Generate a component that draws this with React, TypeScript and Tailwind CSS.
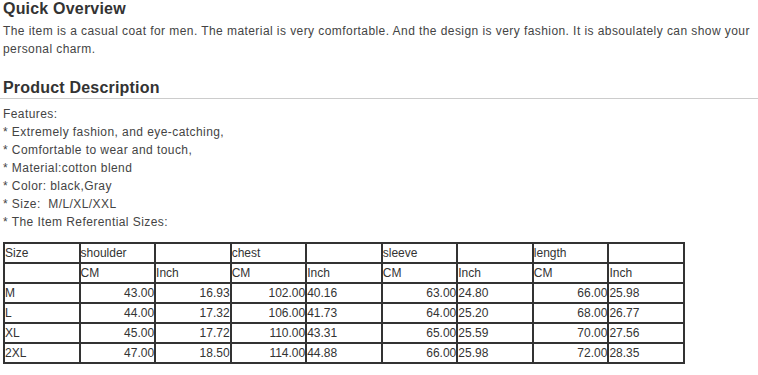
import React from "react";

const rows: string[][] = [
  ["M", "43.00", "16.93", "102.00", "40.16", "63.00", "24.80", "66.00", "25.98"],
  ["L", "44.00", "17.32", "106.00", "41.73", "64.00", "25.20", "68.00", "26.77"],
  ["XL", "45.00", "17.72", "110.00", "43.31", "65.00", "25.59", "70.00", "27.56"],
  ["2XL", "47.00", "18.50", "114.00", "44.88", "66.00", "25.98", "72.00", "28.35"],
];

const align = ["text-left", "text-right", "text-right", "text-right", "text-left", "text-right", "text-left", "text-right", "text-left"];

const cell = "border border-[#333] p-0 whitespace-nowrap overflow-hidden";

export default function App() {
  return (
    <div className="w-[758px] h-[375px] bg-white pl-[3px] font-['Liberation_Sans',Arial,sans-serif] text-[12px] leading-[18px] text-[#444] overflow-hidden">
      <h2 className="text-[16px] font-bold leading-[18.4px] tracking-[0.2px] text-[#333]">Quick Overview</h2>
      <p className="mt-[4px] tracking-[0.43px]">
        The item is a casual coat for men. The material is very comfortable. And the design is very fashion. It is absoulately can show your personal charm.
      </p>
      <h2 className="mt-[21px] -ml-[3px] pl-[3px] text-[16px] font-bold leading-[18.4px] tracking-[0.2px] text-[#333] border-b border-[#ccc]">
        Product Description
      </h2>
      <div className="mt-[6px] tracking-[0.43px]">
        <div>Features:</div>
        <div>* Extremely fashion, and eye-catching,</div>
        <div>* Comfortable to wear and touch,</div>
        <div>* Material:cotton blend</div>
        <div>* Color: black,Gray</div>
        <div>* Size:&nbsp; M/L/XL/XXL</div>
        <div>* The Item Referential Sizes:</div>
      </div>
      <table className="mt-[11px] w-[682px] table-fixed border-separate border-spacing-0 border border-[#333] text-[#333]">
        <tbody>
          <tr>
            <td className={cell + " text-left"}>Size</td>
            <td className={cell + " text-left"}>shoulder</td>
            <td className={cell}></td>
            <td className={cell + " text-left"}>chest</td>
            <td className={cell}></td>
            <td className={cell + " text-left"}>sleeve</td>
            <td className={cell}></td>
            <td className={cell + " text-left"}>length</td>
            <td className={cell}></td>
          </tr>
          <tr>
            <td className={cell}></td>
            <td className={cell + " text-left"}>CM</td>
            <td className={cell + " text-left"}>Inch</td>
            <td className={cell + " text-left"}>CM</td>
            <td className={cell + " text-left"}>Inch</td>
            <td className={cell + " text-left"}>CM</td>
            <td className={cell + " text-left"}>Inch</td>
            <td className={cell + " text-left"}>CM</td>
            <td className={cell + " text-left"}>Inch</td>
          </tr>
          {rows.map((r) => (
            <tr key={r[0]}>
              {r.map((v, i) => (
                <td key={i} className={cell + " " + align[i]}>
                  {v}
                </td>
              ))}
            </tr>
          ))}
        </tbody>
      </table>
    </div>
  );
}
